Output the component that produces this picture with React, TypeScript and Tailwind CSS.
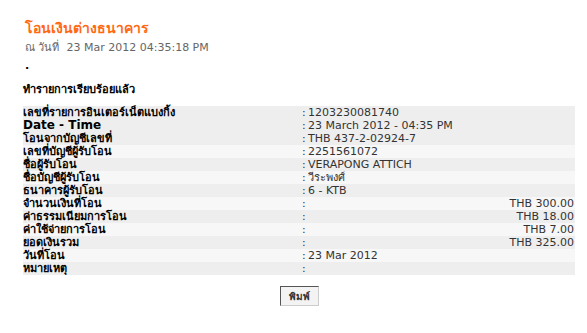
import React from "react";

const rows: { label: string; value: string; right?: boolean; big?: boolean; bg: string }[] = [
  { label: "เลขที่รายการอินเตอร์เน็ตแบงกิ้ง", value: "1203230081740", bg: "bg-[#efeeee]" },
  { label: "Date - Time", value: "23 March 2012 - 04:35 PM", big: true, bg: "bg-[#efeeee]" },
  { label: "โอนจากบัญชีเลขที่", value: "THB 437-2-02924-7", bg: "bg-[#efeeee]" },
  { label: "เลขที่บัญชีผู้รับโอน", value: "2251561072", bg: "bg-[#f7f7f7]" },
  { label: "ชื่อผู้รับโอน", value: "VERAPONG ATTICH", bg: "bg-[#efeeee]" },
  { label: "ชื่อบัญชีผู้รับโอน", value: "วีระพงศ์", bg: "bg-[#f7f7f7]" },
  { label: "ธนาคารผู้รับโอน", value: "6 - KTB", bg: "bg-[#efeeee]" },
  { label: "จำนวนเงินที่โอน", value: "THB 300.00", right: true, bg: "bg-[#f7f7f7]" },
  { label: "ค่าธรรมเนียมการโอน", value: "THB 18.00", right: true, bg: "bg-[#efeeee]" },
  { label: "ค่าใช้จ่ายการโอน", value: "THB 7.00", right: true, bg: "bg-[#f7f7f7]" },
  { label: "ยอดเงินรวม", value: "THB 325.00", right: true, bg: "bg-[#efeeee]" },
  { label: "วันที่โอน", value: "23 Mar 2012", bg: "bg-[#f7f7f7]" },
  { label: "หมายเหตุ", value: "", bg: "bg-[#efeeee]" },
];

export default function App() {
  return (
    <div className="w-[587px] h-[333px] bg-white text-black font-['DejaVu_Sans','Noto_Sans',sans-serif] overflow-hidden">
      <div className="pl-[25px] pt-[19px]">
        <div className="text-[14px] leading-[18px] font-bold text-[#ff6a13]">โอนเงินต่างธนาคาร</div>
        <div className="mt-[4px] text-[11px] leading-[14px] text-[#666]">ณ วันที่&nbsp; 23 Mar 2012 04:35:18 PM</div>
        <div className="mt-[5px] text-[11px] leading-[12px] text-black font-bold">.</div>
      </div>
      <div className="pl-[23px] mt-[11px] text-[11px] leading-[14px] font-bold">ทำรายการเรียบร้อยแล้ว</div>
      <div className="ml-[23px] w-[552px] mt-[9px] flex flex-col">
        {rows.map((r, i) => (
          <div key={i} className={`flex h-[13px] items-center ${r.bg}`}>
            <div className={`w-[279px] font-bold text-black whitespace-nowrap ${r.big ? "text-[12px]" : "text-[11px]"} leading-[13px]`}>
              {r.label}
            </div>
            <div className="w-[6px] text-[11px] leading-[13px] text-[#333]">:</div>
            <div className={`flex-1 text-[11px] leading-[13px] text-[#333] whitespace-nowrap pr-[1px] ${r.right ? "text-right" : "text-left"}`}>
              {r.value}
            </div>
          </div>
        ))}
      </div>
      <div className="flex justify-center mt-[11px] pl-[12px]">
        <button className="h-[20px] px-[8px] text-[10px] font-bold text-[#333] bg-[#f3f3f3] border border-t-[#555] border-l-[#555] border-r-[#ccc] border-b-[#ccc]">
          พิมพ์
        </button>
      </div>
    </div>
  );
}
